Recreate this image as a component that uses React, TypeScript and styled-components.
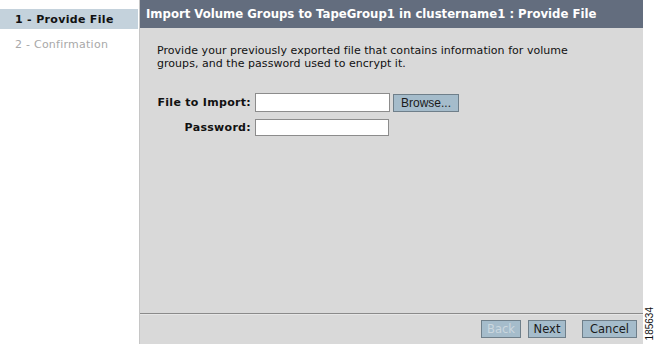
import React from "react";
import styled, { createGlobalStyle } from "styled-components";

const Global = createGlobalStyle`
  html, body { margin: 0; padding: 0; background: #ffffff; }
  body { width: 657px; height: 344px; overflow: hidden; font-family: "DejaVu Sans", Verdana, sans-serif; }
  #root { width: 657px; height: 344px; }
`;

const Page = styled.div`
  display: flex;
  width: 657px;
  height: 344px;
`;

const Sidebar = styled.nav`
  width: 139px;
  flex: none;
  background: #ffffff;
  padding-top: 9px;
  display: flex;
  flex-direction: column;
`;

const Step = styled.div<{ $active?: boolean }>`
  height: 20px;
  margin-right: 1px;
  padding-left: 15px;
  display: flex;
  align-items: center;
  font-size: 11px;
  letter-spacing: ${(p) => (p.$active ? "0.32px" : "0.25px")};
  font-weight: ${(p) => (p.$active ? 700 : 400)};
  color: ${(p) => (p.$active ? "#111111" : "#a8a8a8")};
  background: ${(p) => (p.$active ? "#c4d2dc" : "transparent")};
  margin-bottom: 5px;
`;

const Main = styled.main`
  width: 503px;
  flex: none;
  display: flex;
  flex-direction: column;
  background: #d9d9d9;
  border-left: 1px solid #c6c6c6;
`;

const Header = styled.header`
  height: 28px;
  flex: none;
  background: #636d7e;
  color: #ffffff;
  font-weight: 700;
  font-size: 11.7px;
  display: flex;
  align-items: center;
  padding-left: 6px;
  white-space: nowrap;
`;

const Content = styled.section`
  flex: 1;
  padding: 16px 16px 0 17px;
  color: #111111;
`;

const Intro = styled.p`
  margin: 0 0 23px 0;
  font-size: 11px;
  line-height: 13px;
  letter-spacing: 0.04px;
  width: 440px;
`;

const Form = styled.div`
  display: grid;
  grid-template-columns: 94px auto;
  column-gap: 4px;
  row-gap: 7px;
  align-items: center;
`;

const Label = styled.label`
  font-size: 11px;
  font-weight: 700;
  letter-spacing: 0.3px;
  text-align: right;
  white-space: nowrap;
`;

const FieldRow = styled.div`
  display: flex;
  align-items: center;
  gap: 3px;
`;

const TextInput = styled.input<{ $w: number; $h: number }>`
  width: ${(p) => p.$w}px;
  height: ${(p) => p.$h}px;
  box-sizing: border-box;
  border: 1px solid #8c8c8c;
  background: #ffffff;
  padding: 0 2px;
  margin: 0;
  font-size: 11px;
`;

const Button = styled.button<{ $w: number; $disabled?: boolean; $arial?: boolean }>`
  width: ${(p) => p.$w}px;
  height: 18px;
  box-sizing: border-box;
  margin: 0;
  padding: 0;
  background: #a5bccb;
  border: 1px solid #6f7f8a;
  color: ${(p) => (p.$disabled ? "#cbd7df" : "#1a1a1a")};
  font-family: ${(p) => (p.$arial ? '"Liberation Sans", Arial, sans-serif' : '"DejaVu Sans", Verdana, sans-serif')};
  font-size: ${(p) => (p.$arial ? "12px" : "11.5px")};
  display: flex;
  align-items: center;
  justify-content: center;
`;

const Footer = styled.footer`
  height: 31px;
  box-sizing: border-box;
  flex: none;
  border-top: 1px solid #8a8a8a;
  box-shadow: inset 0 1px 0 #e6e6e6;
  display: flex;
  justify-content: flex-end;
  align-items: flex-start;
  padding: 6px 6px 0 0;
  gap: 7px;
`;

const Spacer = styled.span`
  width: 2px;
`;

const Gutter = styled.aside`
  flex: 1;
  display: flex;
  flex-direction: column;
  justify-content: flex-end;
  align-items: center;
  padding-bottom: 4px;
`;

const FigNo = styled.span`
  writing-mode: vertical-rl;
  transform: rotate(180deg);
  font-family: "Liberation Sans", Arial, sans-serif;
  font-size: 10px;
  color: #111111;
  line-height: 10px;
`;

export default function App() {
  return (
    <>
      <Global />
      <Page>
        <Sidebar>
          <Step $active>1 - Provide File</Step>
          <Step>2 - Confirmation</Step>
        </Sidebar>
        <Main>
          <Header>Import Volume Groups to TapeGroup1 in clustername1 : Provide File</Header>
          <Content>
            <Intro>
              Provide your previously exported file that contains information for volume
              groups, and the password used to encrypt it.
            </Intro>
            <Form>
              <Label>File to Import:</Label>
              <FieldRow>
                <TextInput $w={135} $h={19} type="text" />
                <Button $w={66} $arial>Browse...</Button>
              </FieldRow>
              <Label>Password:</Label>
              <FieldRow>
                <TextInput $w={134} $h={17} type="password" />
              </FieldRow>
            </Form>
          </Content>
          <Footer>
            <Button $w={40} $disabled>Back</Button>
            <Button $w={38}>Next</Button>
            <Spacer />
            <Button $w={55}>Cancel</Button>
          </Footer>
        </Main>
        <Gutter>
          <FigNo>185634</FigNo>
        </Gutter>
      </Page>
    </>
  );
}
